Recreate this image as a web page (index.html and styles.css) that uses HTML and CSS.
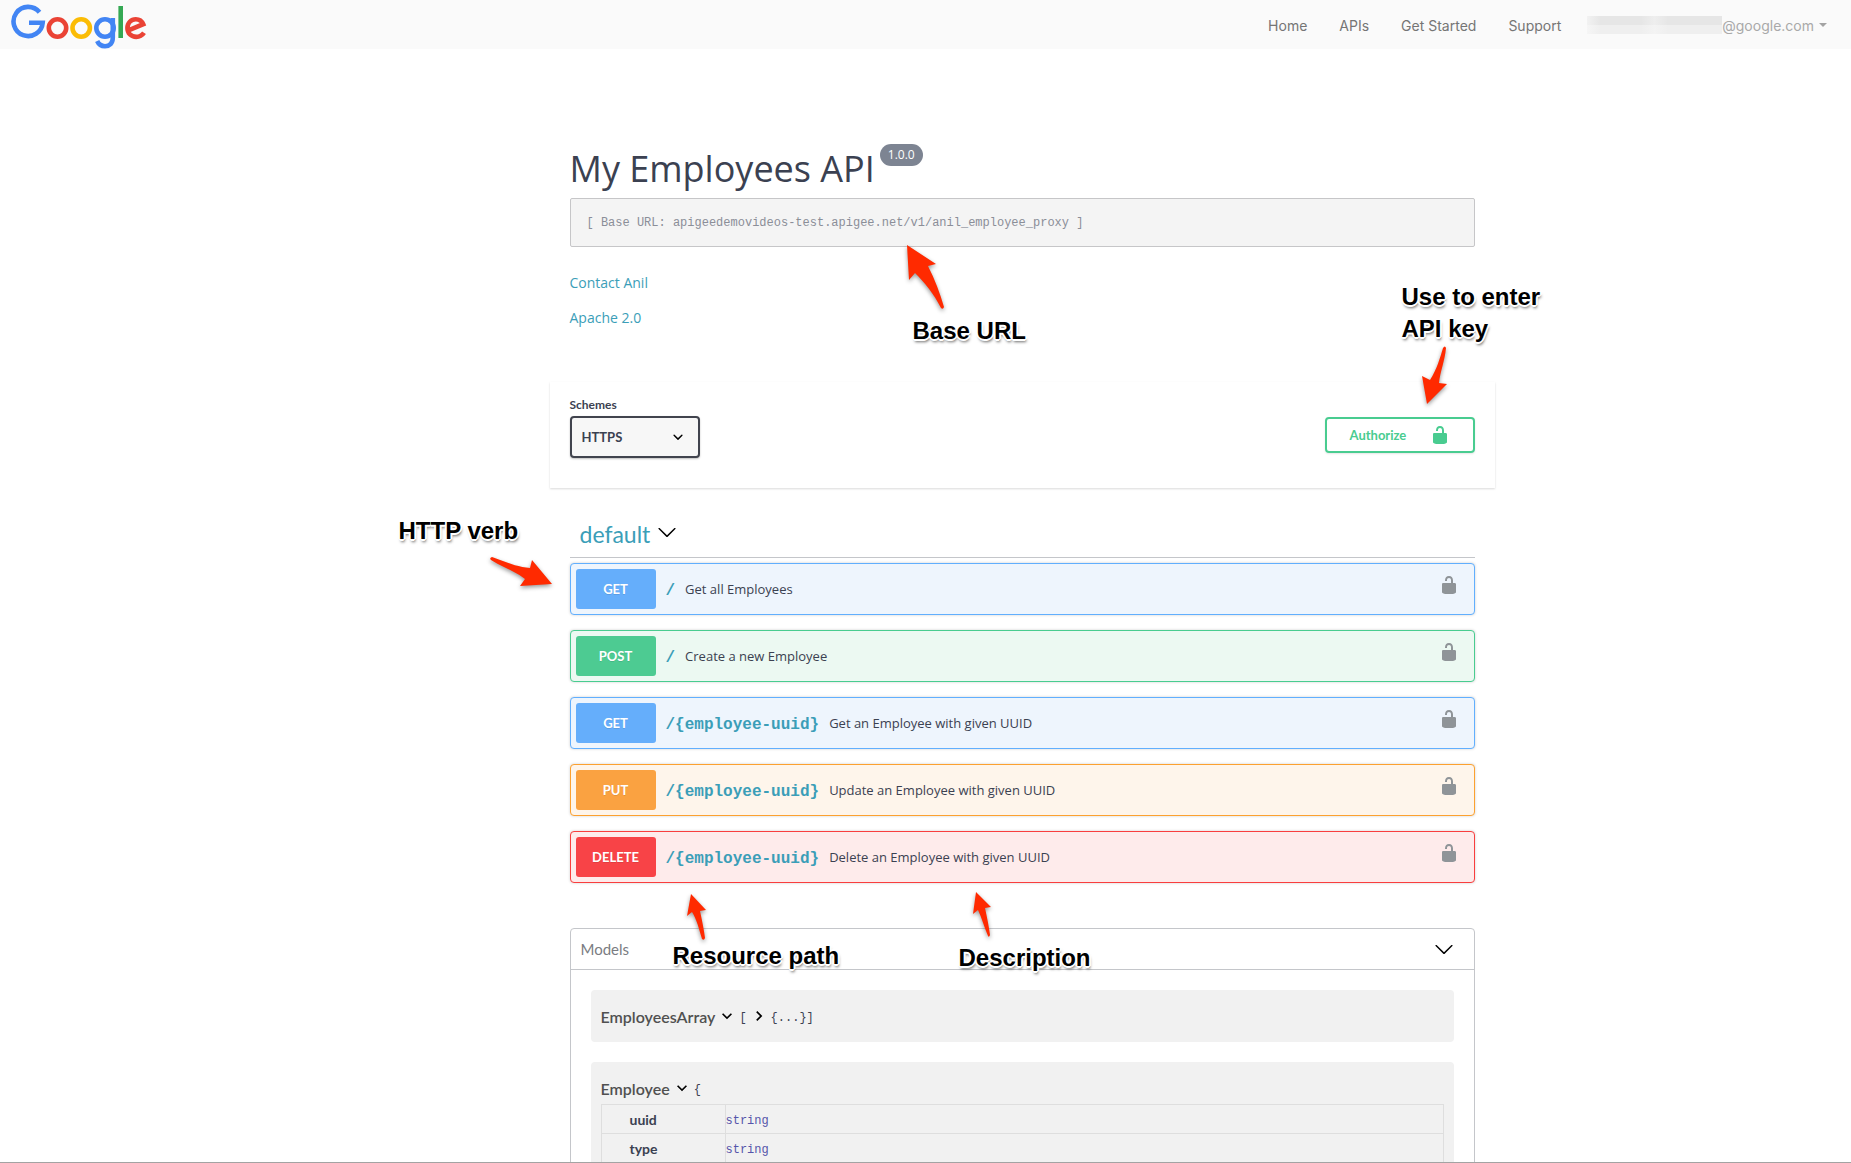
FILE: index.html
```html
<!DOCTYPE html>
<html lang="en">
<head>
<meta charset="utf-8">
<title>My Employees API</title>
<link rel="stylesheet" href="styles.css">
</head>
<body>
<svg class="sprite" aria-hidden="true">
  <symbol id="unlocked" viewBox="0 0 20 20"><path d="M15.8 8H14V5.6C14 2.703 12.665 1 10 1 7.334 1 6 2.703 6 5.6V6h2v-.801C8 3.754 8.797 3 10 3c1.203 0 2 .754 2 2.199V8H4c-.553 0-1 .646-1 1.199V17c0 .549.428 1.139.951 1.307l1.197.387C5.672 18.861 6.55 19 7.1 19h5.8c.549 0 1.428-.139 1.951-.307l1.196-.387c.524-.167.953-.757.953-1.306V9.199C17 8.646 16.352 8 15.8 8z"/></symbol>
  <symbol id="large-arrow" viewBox="0 0 20 20"><path d="M17.418 6.109c.272-.268.709-.268.979 0s.271.701 0 .969l-7.908 7.83c-.27.268-.707.268-.979 0l-7.908-7.83c-.27-.268-.27-.701 0-.969.271-.268.709-.268.979 0L10 13.25l7.418-7.141z"/></symbol>
  <symbol id="toggle" viewBox="0 0 24 24"><path d="M10 6L8.590 7.410 13.170 12l-4.580 4.590L10 18l6-6z"/></symbol>
</svg>

<header class="topbar">
  <a class="logo" href="#" aria-label="Google">
    <svg width="136" height="46" viewBox="11 4 136 46" fill="none" stroke-width="4.600">
      <path stroke="#4285f4" d="M39.500 12.300A14.600 14.600 0 1 0 42.700 22.700H29"/>
      <circle stroke="#ea4335" cx="57.500" cy="28" r="8.700"/>
      <circle stroke="#fbbc05" cx="81.200" cy="28" r="8.700"/>
      <circle stroke="#4285f4" cx="105" cy="28" r="8.700"/>
      <path stroke="#4285f4" d="M112.800 18V37.500C112.800 43.500 109.500 46.200 105 46.200C101 46.200 98.500 44 97.200 41"/>
      <path stroke="#34a853" d="M120.700 6V38"/>
      <path stroke="#ea4335" d="M127.800 30.600L143.200 24.200C141.800 20.800 139 19.200 135.800 19.200C131 19.200 127.400 23 127.400 28C127.400 33.300 131.200 36.900 136.200 36.900C139.600 36.900 142.200 35.500 144 32.800"/>
    </svg>
  </a>
  <nav class="nav" aria-label="Main">
    <a href="#">Home</a>
    <a href="#">APIs</a>
    <a href="#">Get Started</a>
    <a href="#">Support</a>
    <a class="account" href="#"><span class="redacted"></span>@google.com<span class="caret"></span></a>
  </nav>
</header>

<main class="container">
  <div class="content">
    <section class="info">
      <h1>My Employees API<span class="version">1.0.0</span></h1>
      <pre class="base-url">[ Base URL: apigeedemovideos-test.apigee.net/v1/anil_employee_proxy ]</pre>
      <a href="#">Contact Anil</a>
      <a href="#">Apache 2.0</a>
    </section>

    <section class="schemes">
      <label class="scheme">Schemes
        <select><option>HTTPS</option></select>
      </label>
      <button class="authorize" type="button">Authorize<svg width="20" height="20"><use href="#unlocked"/></svg></button>
    </section>

    <section class="operations">
      <h2>default<svg width="20" height="20"><use href="#large-arrow"/></svg></h2>
      <div class="op get"><span class="method">GET</span><a class="path" href="#">/</a><span class="summary">Get all Employees</span><button class="lock" type="button" aria-label="Authorize"><svg width="20" height="20"><use href="#unlocked"/></svg></button></div>
      <div class="op post"><span class="method">POST</span><a class="path" href="#">/</a><span class="summary">Create a new Employee</span><button class="lock" type="button" aria-label="Authorize"><svg width="20" height="20"><use href="#unlocked"/></svg></button></div>
      <div class="op get"><span class="method">GET</span><a class="path" href="#">/{employee-uuid}</a><span class="summary">Get an Employee with given UUID</span><button class="lock" type="button" aria-label="Authorize"><svg width="20" height="20"><use href="#unlocked"/></svg></button></div>
      <div class="op put"><span class="method">PUT</span><a class="path" href="#">/{employee-uuid}</a><span class="summary">Update an Employee with given UUID</span><button class="lock" type="button" aria-label="Authorize"><svg width="20" height="20"><use href="#unlocked"/></svg></button></div>
      <div class="op delete"><span class="method">DELETE</span><a class="path" href="#">/{employee-uuid}</a><span class="summary">Delete an Employee with given UUID</span><button class="lock" type="button" aria-label="Authorize"><svg width="20" height="20"><use href="#unlocked"/></svg></button></div>
    </section>

    <section class="models">
      <h3>Models<svg width="20" height="20"><use href="#large-arrow"/></svg></h3>
      <div class="model">
        <div class="model-head"><span class="model-name">EmployeesArray</span><svg class="toggle open" width="20" height="20"><use href="#toggle"/></svg><code>[</code><svg class="toggle" width="20" height="20"><use href="#toggle"/></svg><code>{...}]</code></div>
      </div>
      <div class="model">
        <div class="model-head"><span class="model-name">Employee</span><svg class="toggle open" width="20" height="20"><use href="#toggle"/></svg><code>{</code></div>
        <table>
          <tr><th scope="row">uuid</th><td>string</td></tr>
          <tr><th scope="row">type</th><td>string</td></tr>
        </table>
      </div>
    </section>

    <svg class="arrows" width="1120" height="960" viewBox="390 0 1120 960" aria-hidden="true">
      <path d="M907 245L936 264L928 266C935 280 940 293 944 307Q943 310 941 308C934 294 925 283 915 273L909 280Z"/>
      <path d="M1427 404L1422 376L1430 380C1437 369 1440 358 1443 348Q1445 345 1446 348C1445 360 1440 372 1439 383L1447 384Z"/>
      <path d="M552 584L532 560L530 568C516 567 504 561 492 557Q489 558 491 560C502 567 515 571 525 579L520 586Z"/>
      <path d="M691 894L706 910L700 911C702 920 704 930 705 938Q704 941 702 939C699 929 697 920 692 912L687 916Z"/>
      <path d="M976 892L991 907L985 908C987 917 989 927 990 935Q989 938 988 936C984 927 982 918 978 910L973 914Z"/>
    </svg>
    <span class="note note-base">Base URL</span>
    <span class="note note-key">Use to enter<br>API key</span>
    <span class="note note-verb">HTTP verb</span>
    <span class="note note-path">Resource path</span>
    <span class="note note-description">Description</span>
  </div>
</main>
</body>
</html>
```
FILE: styles.css
```css
* {
  box-sizing: border-box;
}

body {
  margin: 0;
  height: 100vh;
  overflow: hidden;
  border-bottom: 1px solid #a3a3a3;
  background: #fff;
  color: #3b4151;
  font-family: "Open Sans", sans-serif;
  font-size: 14px;
}

a {
  text-decoration: none;
}

button {
  padding: 0;
  background: none;
  border: 0;
  color: inherit;
  cursor: pointer;
}

svg {
  display: block;
  flex: none;
}

.sprite {
  position: absolute;
  width: 0;
  height: 0;
}

/* Top bar */

.topbar {
  display: flex;
  justify-content: space-between;
  height: 49px;
  padding: 4px 24px 0 11px;
  background: #fafafa;
}

.nav {
  display: flex;
  gap: 32px;
  height: 42px;
  align-items: center;
  font-family: Inter, sans-serif;
  font-size: 14px;
}

.nav a {
  color: #757575;
}

.nav .account {
  display: flex;
  align-items: center;
  margin-left: -6px;
  color: #a9a9a9;
}

.redacted {
  width: 135px;
  height: 18px;
  background:
    linear-gradient(90deg, rgba(250, 250, 250, .6), transparent 10% 40%, rgba(250, 250, 250, .4) 50%, transparent 60%),
    linear-gradient(#e6e6e6 0 50%, #efefef 50%);
}

.caret {
  margin-left: 5px;
  border: 4px solid transparent;
  border-top-color: #a3a3a3;
  border-bottom: 0;
}

/* Page columns */

.container {
  max-width: 1170px;
  margin: 0 auto;
  padding: 0 16px 0 209px;
}

.content {
  position: relative;
  padding-top: 95px;
}

/* API info */

.info {
  padding: 0 20px;
}

h1 {
  display: flex;
  margin: 0 0 5px;
  font-size: 36px;
  font-weight: 400;
  line-height: 49px;
}

.version {
  align-self: flex-start;
  margin-left: 5px;
  padding: 0 8px;
  border-radius: 11px;
  background: #7d8492;
  color: #fff;
  font-size: 12px;
  line-height: 22px;
}

.base-url {
  margin: 0 0 26px;
  padding: 2px 16px 0;
  border: 1px solid #c6c6c8;
  border-radius: 2px;
  background: #f4f4f4;
  color: #8b8e98;
  font: 12px/45px "Liberation Mono", monospace;
}

.info a {
  display: block;
  width: max-content;
  margin-bottom: 15px;
  color: #3b9eb8;
  line-height: 20px;
}

/* Schemes */

.schemes {
  display: flex;
  justify-content: space-between;
  align-items: flex-start;
  margin-top: 54px;
  height: 106px;
  padding: 15px 20px;
  box-shadow: 0 1px 2px rgba(0, 0, 0, .15);
}

.scheme {
  display: flex;
  flex-direction: column;
  gap: 3px;
  font: 700 12px/16px Lato, sans-serif;
}

select {
  appearance: none;
  width: 130px;
  height: 42px;
  padding: 0 10px;
  border: 2px solid #41444e;
  border-radius: 4px;
  background: #f7f7f7 url('data:image/svg+xml,<svg xmlns="http://www.w3.org/2000/svg" viewBox="0 0 20 20"><path d="M13.418 7.859a.695.695 0 0 1 .978 0 .68.68 0 0 1 0 .969l-3.908 3.830a.697.697 0 0 1-.979 0l-3.908-3.830a.68.68 0 0 1 0-.969.695.695 0 0 1 .978 0L10 11l3.418-3.141z"/></svg>') no-repeat right 10px center / 20px;
  box-shadow: 0 1px 2px rgba(0, 0, 0, .25);
  color: #3b4151;
  font: 700 13px Lato, sans-serif;
}

.authorize {
  display: flex;
  justify-content: space-between;
  align-items: center;
  width: 150px;
  height: 36px;
  margin-top: 20px;
  padding: 0 23px;
  border: 2px solid #49cc90;
  border-radius: 4px;
  box-shadow: 0 1px 2px rgba(0, 0, 0, .1);
  color: #49cc90;
  fill: #49cc90;
  font: 700 13px Lato, sans-serif;
}

/* Operations */

.operations {
  display: flex;
  flex-direction: column;
  gap: 15px;
  padding: 27px 20px 0;
}

h2 {
  display: flex;
  align-items: center;
  gap: 7px;
  height: 43px;
  margin: 0 0 -10px;
  padding: 0 10px 5px;
  border-bottom: 1px solid #c4c6ca;
  color: #3b9eb8;
  font: 400 23px/36px Lato, sans-serif;
}

h2 svg {
  margin-bottom: 4px;
}

.op {
  display: flex;
  align-items: center;
  height: 52px;
  padding: 5px 15px 5px 5px;
  border: 1px solid;
  border-radius: 4px;
  box-shadow: 0 0 3px rgba(0, 0, 0, .19);
}

.method {
  width: 80px;
  border-radius: 3px;
  color: #fff;
  font: 700 13px/40px Lato, sans-serif;
  text-align: center;
  text-shadow: 0 1px 0 rgba(0, 0, 0, .1);
}

.path {
  padding: 3px 10px 0;
  color: #3b9eb8;
  font: 600 16px "Liberation Mono", monospace;
}

.summary {
  flex: 1;
  font-size: 13px;
}

.lock {
  margin-bottom: 8px;
  fill: #8f9498;
}

.get { border-color: #61affe; background: #eef5fd; }
.get .method { background: #65aefb; }
.post { border-color: #49cc90; background: #ecf9f2; }
.post .method { background: #4dcb92; }
.put { border-color: #fca130; background: #fef5eb; }
.put .method { background: #faa241; }
.delete { border-color: #f93e3e; background: #feebeb; }
.delete .method { background: #f84347; }

/* Models */

.models {
  margin: 45px 20px 0;
  padding-bottom: 20px;
  border: 1px solid #c4c6ca;
  border-radius: 4px;
}

h3 {
  display: flex;
  justify-content: space-between;
  align-items: center;
  height: 41px;
  margin: 0;
  padding: 0 20px 0 10px;
  border-bottom: 1px solid #c4c6ca;
  color: #7a7c82;
  font: 400 15px Lato, sans-serif;
}

h3 svg {
  fill: #000;
}

.model {
  margin: 20px 20px 0;
  padding: 10px;
  border-radius: 4px;
  background: #f1f1f1;
}

.model-head {
  display: flex;
  align-items: center;
  height: 32px;
}

.model-name {
  color: #505050;
  font: 600 16px Lato, sans-serif;
}

.toggle {
  margin: 0 2px;
}

.toggle.open {
  transform: rotate(90deg);
}

code,
td {
  font: 12px "Liberation Mono", monospace;
}

code {
  padding-top: 3px;
}

table {
  width: 100%;
  border-collapse: collapse;
}

tr {
  height: 29px;
}

th,
td {
  padding: 0;
  border: 1px solid #dedede;
  text-align: left;
}

th {
  width: 124px;
  padding-left: 28px;
  font: 700 14px Lato, sans-serif;
}

td {
  padding-top: 3px;
  color: #5555aa;
}

/* Callouts over the page */

.arrows {
  position: absolute;
  top: -49px;
  left: -160px;
  fill: #ff2a00;
  filter: drop-shadow(0 2px 2px rgba(0, 0, 0, .4));
  pointer-events: none;
}

.note {
  position: absolute;
  color: #000;
  font: 700 24px/32px "Liberation Sans", sans-serif;
  white-space: nowrap;
  text-shadow: 2px 0 #fff, -2px 0 #fff, 0 2px #fff, 0 -2px #fff, 1px 1px #fff, -1px 1px #fff, 1px 3px 3px rgba(0, 0, 0, .6);
}

.note-base { top: 266px; left: 363px; }
.note-key { top: 232px; left: 852px; }
.note-verb { top: 466px; left: -151px; }
.note-path { top: 891px; left: 123px; }
.note-description { top: 893px; left: 409px; }
```
